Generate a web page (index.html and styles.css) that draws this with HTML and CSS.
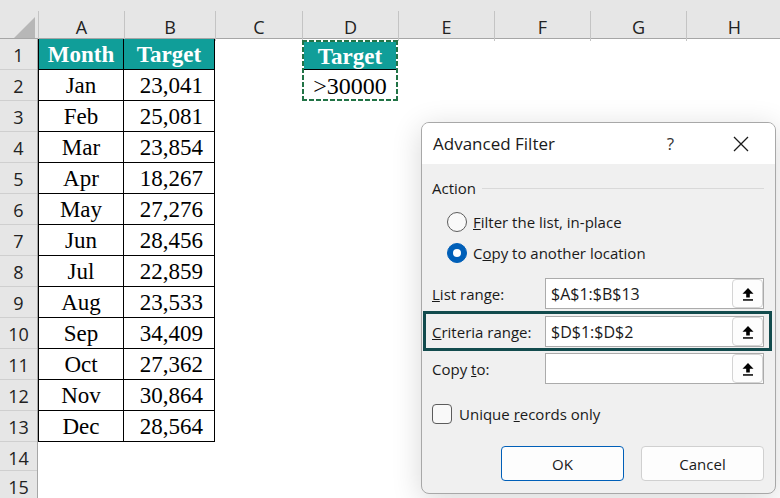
FILE: index.html
```html
<!DOCTYPE html>
<html lang="en">
<head>
    <meta charset="UTF-8">
    <title>Advanced Filter</title>
    <link rel="stylesheet" href="styles.css">
</head>
<body>
    <div class="sheet">
        <div class="colhead">
            <div class="corner"></div>
            <div class="col">A</div>
            <div class="col">B</div>
            <div class="col">C</div>
            <div class="col">D</div>
            <div class="col">E</div>
            <div class="col">F</div>
            <div class="col">G</div>
            <div class="col">H</div>
        </div>
        <div class="sheet-body">
            <div class="rowhead">
                <div>1</div><div>2</div><div>3</div><div>4</div><div>5</div>
                <div>6</div><div>7</div><div>8</div><div>9</div><div>10</div>
                <div>11</div><div>12</div><div>13</div><div class="short">14</div><div>15</div>
            </div>
            <div class="cells">
                <div class="data">
                    <div class="th">Month</div><div class="th">Target</div>
                    <div class="m">Jan</div><div class="n">23,041</div>
                    <div class="m">Feb</div><div class="n">25,081</div>
                    <div class="m">Mar</div><div class="n">23,854</div>
                    <div class="m">Apr</div><div class="n">18,267</div>
                    <div class="m">May</div><div class="n">27,276</div>
                    <div class="m">Jun</div><div class="n">28,456</div>
                    <div class="m">Jul</div><div class="n">22,859</div>
                    <div class="m">Aug</div><div class="n">23,533</div>
                    <div class="m">Sep</div><div class="n">34,409</div>
                    <div class="m">Oct</div><div class="n">27,362</div>
                    <div class="m">Nov</div><div class="n">30,864</div>
                    <div class="m">Dec</div><div class="n">28,564</div>
                </div>
                <div class="crit">
                    <div class="th">Target</div>
                    <div class="m">&gt;30000</div>
                </div>
            </div>
        </div>
    </div>

    <div class="dialog">
        <div class="dlg-title">
            <span class="dlg-name">Advanced Filter</span>
            <span class="dlg-help">?</span>
            <svg class="dlg-close" width="16" height="16" viewBox="0 0 16 16">
                <path d="M1 1 L15 15 M15 1 L1 15" stroke="#1a1a1a" stroke-width="1.3" fill="none"/>
            </svg>
        </div>
        <div class="dlg-body">
            <div class="group-label">Action</div>
            <div class="radio top"><span class="dot"></span><span><u>F</u>ilter the list, in-place</span></div>
            <div class="radio on"><span class="dot"></span><span>C<u>o</u>py to another location</span></div>

            <div class="field first">
                <span class="field-label"><u>L</u>ist range:</span>
                <div class="ref">
                    <span>$A$1:$B$13</span>
                    <button class="pick"><svg width="12" height="14" viewBox="0 0 12 14"><path d="M6 1 L11.5 6.8 H7.8 V10.5 H4.2 V6.8 H0.5 Z" fill="#000"/><rect x="1" y="12.2" width="10" height="1.5" fill="#000"/></svg></button>
                </div>
            </div>
            <div class="field hl">
                <span class="field-label"><u>C</u>riteria range:</span>
                <div class="ref">
                    <span>$D$1:$D$2</span>
                    <button class="pick"><svg width="12" height="14" viewBox="0 0 12 14"><path d="M6 1 L11.5 6.8 H7.8 V10.5 H4.2 V6.8 H0.5 Z" fill="#000"/><rect x="1" y="12.2" width="10" height="1.5" fill="#000"/></svg></button>
                </div>
            </div>
            <div class="field last">
                <span class="field-label">Copy <u>t</u>o:</span>
                <div class="ref">
                    <span></span>
                    <button class="pick"><svg width="12" height="14" viewBox="0 0 12 14"><path d="M6 1 L11.5 6.8 H7.8 V10.5 H4.2 V6.8 H0.5 Z" fill="#000"/><rect x="1" y="12.2" width="10" height="1.5" fill="#000"/></svg></button>
                </div>
            </div>

            <div class="check"><span class="box"></span><span>Unique <u>r</u>ecords only</span></div>

            <div class="actions">
                <button class="btn primary">OK</button>
                <button class="btn">Cancel</button>
            </div>
        </div>
    </div>
</body>
</html>
```

FILE: styles.css
```css
body {
    margin: 0;
    width: 780px;
    height: 498px;
    overflow: hidden;
    background: #fff;
    position: relative;
    font-family: 'Open Sans', 'Noto Sans', sans-serif;
}

/* column letters */
.colhead {
    display: grid;
    grid-template-columns: 38px 86px 91px 87px 96px 96px 96px 96px 96px;
    height: 39px;
    padding-top: 11px;
    box-sizing: border-box;
    background: #e6e6e6;
    border-bottom: 1px solid #a6a6a6;
}

.corner {
    position: relative;
}

.corner::after {
    content: "";
    position: absolute;
    right: 3px;
    bottom: 3px;
    border-style: solid;
    border-width: 0 0 21px 21px;
    border-color: transparent transparent #b7b7b7 transparent;
}

.col {
    border-left: 1px solid #c4c4c4;
    text-align: center;
    font-size: 18px;
    line-height: 28px;
    padding-top: 2px;
    color: #222;
}

.sheet-body {
    display: flex;
}

.rowhead {
    width: 38px;
    background: #e6e6e6;
    border-right: 1px solid #a6a6a6;
    box-sizing: border-box;
    flex-shrink: 0;
}

.rowhead div {
    height: 31px;
    box-sizing: border-box;
    border-bottom: 1px solid #cfcfcf;
    text-align: center;
    font-size: 18px;
    line-height: 30px;
    padding-top: 1px;
    color: #222;
}

.rowhead div.short {
    height: 29px;
    line-height: 28px;
    padding-top: 2px;
}

.cells {
    display: grid;
    grid-template-columns: 86px 91px 87px 96px 96px;
    grid-auto-rows: 31px;
}

.data {
    grid-column: 1 / 3;
    grid-row: 1 / 14;
    display: grid;
    grid-template-columns: 86px 91px;
    grid-auto-rows: 31px;
}

.data > div {
    box-sizing: border-box;
    border-right: 1px solid #000;
    border-bottom: 1px solid #000;
}

.data > div:nth-child(odd) {
    border-left: 1px solid #000;
}

.th, .m, .n {
    font-family: 'Liberation Serif', serif;
    font-size: 23px;
    line-height: 28px;
    padding-top: 2px;
    color: #000;
}

.th {
    background: #109e99;
    color: #fff;
    font-weight: bold;
    text-align: center;
}

.m {
    text-align: center;
}

.n {
    text-align: right;
    padding-right: 11px;
}

/* copied criteria cells, marching ants */
.crit {
    grid-column: 4;
    grid-row: 1 / 3;
    padding: 2px;
    margin-top: 1px;
    background:
        repeating-linear-gradient(90deg, #217346 0 5px, transparent 5px 7px) top / 100% 2px no-repeat,
        repeating-linear-gradient(90deg, #217346 0 5px, transparent 5px 7px) bottom / 100% 2px no-repeat,
        repeating-linear-gradient(180deg, #217346 0 5px, transparent 5px 7px) left / 2px 100% no-repeat,
        repeating-linear-gradient(180deg, #217346 0 5px, transparent 5px 7px) right / 2px 100% no-repeat;
}

.crit .th {
    height: 28px;
    box-sizing: border-box;
    line-height: 27px;
    padding-top: 1px;
    border-bottom: 1px solid #000;
}

.crit .m {
    font-size: 24px;
    line-height: 28px;
    padding-top: 2px;
}

/* dialog */
.dialog {
    position: absolute;
    left: 421px;
    top: 122px;
    width: 355px;
    height: 372px;
    box-sizing: border-box;
    border: 1px solid #a8a8a8;
    border-radius: 8px;
    background: #f0f0f0;
    box-shadow: 0 6px 30px rgba(0, 0, 0, 0.16);
    color: #1a1a1a;
    font-size: 15px;
    overflow: hidden;
}

.dlg-title {
    height: 41px;
    background: #fff;
    display: flex;
    align-items: center;
    padding-left: 11px;
}

.dlg-name {
    font-size: 17px;
    flex: 1;
}

.dlg-help {
    font-size: 17px;
    margin-right: 59px;
    color: #333;
}

.dlg-close {
    margin-right: 26px;
}

.dlg-body {
    padding: 14px 11px 0 10px;
}

.group-label {
    display: flex;
    align-items: center;
    gap: 6px;
    height: 20px;
    line-height: 20px;
}

.group-label::after {
    content: "";
    flex: 1;
    border-top: 1px solid #d9d9d9;
}

.radio {
    display: flex;
    align-items: center;
    height: 31px;
    padding-left: 15px;
    gap: 6px;
}

.radio.top {
    margin-top: 8px;
}

.dot {
    width: 20px;
    height: 20px;
    box-sizing: border-box;
    border: 1px solid #5c5c5c;
    border-radius: 50%;
    background: #f9f9f9;
    position: relative;
}

.radio.on .dot {
    background: #005fb8;
    border-color: #005fb8;
}

.radio.on .dot::after {
    content: "";
    position: absolute;
    left: 5px;
    top: 5px;
    width: 8px;
    height: 8px;
    border-radius: 50%;
    background: #fff;
}

.field {
    display: flex;
    align-items: center;
    height: 31px;
    position: relative;
}

.field.first {
    margin-top: 10px;
}

.field.hl {
    margin-top: 7px;
}

.field.last {
    margin-top: 6px;
}

.field.hl::before {
    content: "";
    position: absolute;
    left: -9px;
    right: -8px;
    top: -5px;
    bottom: -4px;
    border: 3px solid #124b4d;
}

.field-label {
    width: 113px;
}

.ref {
    flex: 1;
    height: 31px;
    box-sizing: border-box;
    border: 1px solid #ababab;
    background: #fff;
    display: flex;
    align-items: center;
    padding-left: 5px;
    font-size: 16px;
}

.ref span {
    flex: 1;
}

.pick {
    width: 31px;
    height: 29px;
    border: 1px solid #d4d4d4;
    border-radius: 4px;
    background: #fdfdfd;
    padding: 0;
    display: flex;
    align-items: center;
    justify-content: center;
}

.check {
    display: flex;
    align-items: center;
    gap: 7px;
    height: 20px;
    margin-top: 20px;
}

.box {
    width: 20px;
    height: 20px;
    box-sizing: border-box;
    border: 1px solid #5c5c5c;
    border-radius: 4px;
    background: #f9f9f9;
}

.actions {
    display: flex;
    justify-content: flex-end;
    gap: 17px;
    margin-top: 22px;
}

.btn {
    width: 123px;
    height: 35px;
    border: 1px solid #d0d0d0;
    border-radius: 4px;
    background: #fdfdfd;
    font-family: inherit;
    font-size: 15px;
    color: #1a1a1a;
}

.btn.primary {
    border-color: #005fb8;
}
```
